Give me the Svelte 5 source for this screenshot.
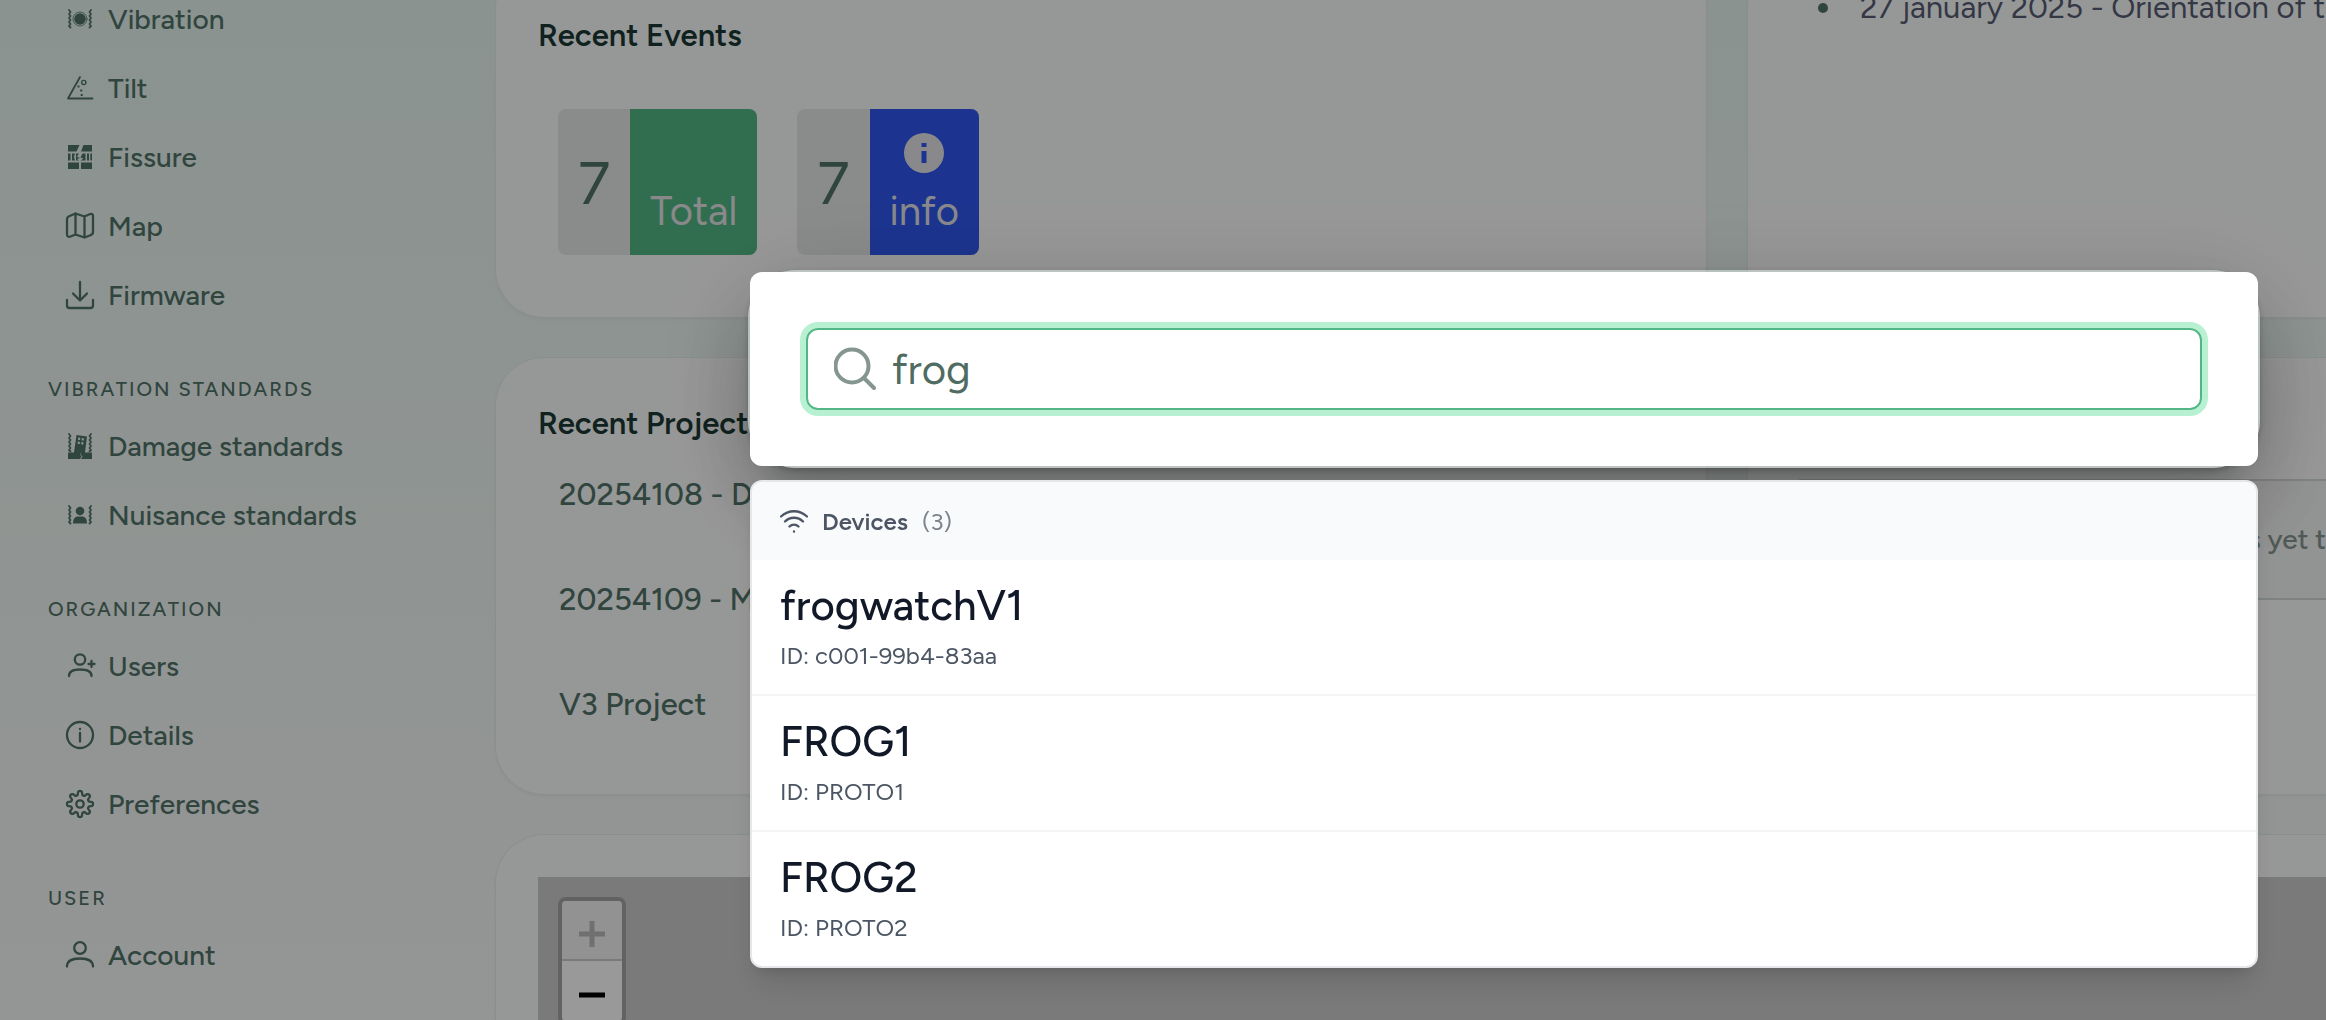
<script>
	let query = $state('frog');

	const sections = [
		{ title: '', items: ['Vibration', 'Tilt', 'Fissure', 'Map', 'Firmware'] },
		{ title: 'Vibration standards', items: ['Damage standards', 'Nuisance standards'] },
		{ title: 'Organization', items: ['Users', 'Details', 'Preferences'] },
		{ title: 'User', items: ['Account'] }
	];

	const projects = ['20254108 - D', '20254109 - M', 'V3 Project'];

	const devices = [
		{ name: 'frogwatchV1', id: 'c001-99b4-83aa' },
		{ name: 'FROG1', id: 'PROTO1' },
		{ name: 'FROG2', id: 'PROTO2' }
	];

	// eight rounded teeth around the centre of a 32x32 box
	function gearPath() {
		let d = '';
		for (let i = 0; i < 128; i++) {
			const a = (i / 128) * Math.PI * 2;
			const wave = Math.tanh(2 * Math.cos(8 * a)) / Math.tanh(2);
			const r = 11 + 2 * wave;
			d += (i ? 'L' : 'M') + (16 + r * Math.sin(a)).toFixed(2) + ' ' + (16 - r * Math.cos(a)).toFixed(2);
		}
		return d + 'Z';
	}
</script>

{#snippet waves(top)}
	<g transform="translate(0 {top})">
		<path stroke-width="1.8" d="M5 0l1.5 2L5 4l1.5 2L5 8l1.5 2L5 12l1.5 2L5 16l1.5 1.500M27 0l-1.500 2L27 4l-1.500 2L27 8l-1.500 2L27 12l-1.500 2L27 16l-1.500 1.500" />
	</g>
{/snippet}

{#snippet icon(name)}
	<svg class="icon" viewBox="0 0 32 32" fill="none" stroke="currentColor" stroke-width="2.3" stroke-linecap="round" stroke-linejoin="round" aria-hidden="true">
		{#if name === 'Vibration'}
			{@render waves(7)}
			<circle cx="16" cy="16" r="5.800" fill="currentColor" stroke="none" />
			<circle cx="16" cy="16" r="7" stroke-width="0.8" />
		{:else if name === 'Tilt'}
			<path stroke-width="1.800" d="M16 5L4 26.500H28.500" />
			<circle cx="19.800" cy="10.500" r="2.100" stroke-width="1.400" />
			<path stroke-width="2" stroke-linecap="butt" d="M13.500 14.500h2M16.200 18.500h2M16.700 23h2" />
		{:else if name === 'Fissure'}
			<g fill="currentColor" stroke="none">
				<path d="M4 4h11.500l-3 6.500H4zM19.500 4H28v6.500H17z" />
				<path d="M4 12.500h2.500v7H4zM8 12.500h3l-1 3.500 1 3.500H8zM12 12.500h3l-2 3 3 1.500-3 1 2 1.500h-3zM18.500 12.500h3v7h-5l3-2-3-1zM23 12.500h2v7h-2zM26.300 12.500H28v7h-1.700z" />
				<path d="M4 21.500h11V28H4zM17 21.500h11V28H17z" />
			</g>
		{:else if name === 'Map'}
			<path d="M4.500 6.500l7-3 9 3 5-2.200c2-.8 3.500-.3 3.500 1.700v16c0 1.700-.8 2.600-2.500 3.200l-6 2.300-9-3-5 2c-2 .8-3.500 0-3.500-2V9.500c0-1.500.3-2.400 1.500-3zM11.500 3.500v21M20.500 6.500v21" />
		{:else if name === 'Firmware'}
			<path d="M16 3v18M9 14.500l7 7 7-7M3 21v5.500C3 28.300 3.700 29 5.500 29h21c1.800 0 2.500-.7 2.500-2.500V21" />
		{:else if name === 'Damage standards'}
			{@render waves(4)}
			<g fill="currentColor" stroke="none">
				<path fill-rule="evenodd" d="M4 22.500h6L12.500 5l10.500 1.500-2 16H28V29H17l1.500-2.500-2-2 1.500-3-2 3 1.500 2L16 29H4zM14.200 7.500v2.500h2V7.700zM17.800 8v2.500h2V8.200zM13.800 11.500v2.500h2v-2.300zM17.300 12v2.500h2v-2.300z" />
			</g>
		{:else if name === 'Nuisance standards'}
			{@render waves(7)}
			<g fill="currentColor" stroke="none">
				<circle cx="16" cy="12" r="4.300" />
				<path d="M9 24.500c0-5 2-7 5-7h4c3 0 5 2 5 7z" />
			</g>
		{:else if name === 'Users'}
			<circle cx="16" cy="9.500" r="5.200" />
			<path d="M5 26c0-4 3.500-6.500 11-6.500S27.500 22 27.500 26M27.500 11v6M24.500 14h6" />
		{:else if name === 'Details'}
			<circle cx="16" cy="16" r="13" />
			<path d="M16 14v8.500M16 10v.2" />
		{:else if name === 'Preferences'}
			<path d={gearPath()} />
			<circle cx="16" cy="16" r="3.700" />
		{:else if name === 'Account'}
			<circle cx="16" cy="9" r="5.800" />
			<path d="M3 27.500c0-5 4-8 13-8s13 3 13 8" />
		{/if}
	</svg>
{/snippet}

<div class="page">
	<nav class="sidebar">
		{#each sections as section}
			{#if section.title}
				<h2>{section.title}</h2>
			{/if}
			{#each section.items as item}
				<a href="#{item}">{@render icon(item)}{item}</a>
			{/each}
		{/each}
	</nav>

	<main>
		<section class="card events">
			<h3>Recent Events</h3>
			<div class="badges">
				<div class="badge">
					<span class="count">7</span>
					<span class="label total">Total</span>
				</div>
				<div class="badge">
					<span class="count">7</span>
					<span class="label info">
						<svg viewBox="0 0 40 40" width="40" height="40" aria-hidden="true">
							<path fill="currentColor" fill-rule="evenodd" d="M20 0a20 20 0 1 0 0 40a20 20 0 1 0 0-40zM17.500 10v4h5v-4zM17.500 18v12h5V18z" />
						</svg>
						info
					</span>
				</div>
			</div>
		</section>

		<section class="card news">
			<ul>
				<li>27 january 2025 - Orientation of t</li>
			</ul>
		</section>

		<section class="card projects">
			<h3>Recent Projects</h3>
			{#each projects as project}
				<a href="#project">{project}</a>
			{/each}
		</section>

		<section class="card activity">
			<div class="empty">s yet t</div>
		</section>

		<section class="card map-card">
			<div class="map">
				<div class="zoom">
					<button class="off" aria-label="Zoom in">
						<svg viewBox="0 0 26 26" width="26" height="26"><path fill="currentColor" d="M0 10.500h10.500V0h5v10.500H26v5H15.500V26h-5V15.500H0z" /></svg>
					</button>
					<button aria-label="Zoom out">
						<svg viewBox="0 0 26 26" width="26" height="26"><path fill="currentColor" d="M0 10.500h26v5H0z" /></svg>
					</button>
				</div>
			</div>
		</section>
	</main>

	<div class="overlay">
		<div class="dialog" role="dialog" aria-label="Search">
			<div class="panel">
				<label class="search">
					<svg viewBox="0 0 44 44" width="44" height="44" fill="none" stroke="currentColor" stroke-width="4" stroke-linecap="round" aria-hidden="true">
						<circle cx="18" cy="19" r="16.500" />
						<path d="M30 31l10 10" />
					</svg>
					<input type="text" aria-label="Search" bind:value={query} />
				</label>
			</div>
		</div>

		<div class="results">
			<header>
				<svg viewBox="0 0 28 28" width="28" height="28" fill="none" stroke="currentColor" stroke-width="2.3" stroke-linecap="round" aria-hidden="true">
					<path d="M1 9.500C8.500 2.500 19.500 2.500 27 9.500M5 14.500c5-5 13-5 18 0M9.500 19.500c2.500-2.500 6.500-2.500 9 0M14 24.500v.2" />
				</svg>
				<strong>Devices</strong>
				<span>({devices.length})</span>
			</header>
			{#each devices as device}
				<a class="result" href="#{device.id}">
					<span class="name">{device.name}</span>
					<span class="id">ID: {device.id}</span>
				</a>
			{/each}
		</div>
	</div>
</div>

<style>
	:global(body) {
		margin: 0;
	}

	.page {
		display: grid;
		grid-template-columns: 496px minmax(0, 1fr);
		height: 100vh;
		overflow: hidden;
		background: linear-gradient(#e6f6f0, #eef7f3 40%, #f7faf9);
		color: #52736a;
		font-family: Figtree, Lato, 'Noto Sans', sans-serif;
		font-weight: 500;
		font-size: 28px;
	}

	a {
		color: inherit;
		text-decoration: none;
	}

	h2, h3, ul {
		margin: 0;
		padding: 0;
	}

	/* scrolled a little way down */
	.sidebar {
		margin-top: -16px;
		padding-left: 48px;
	}

	.sidebar h2 {
		padding: 48px 0 10px;
		font-size: 20px;
		line-height: 24px;
		font-weight: 500;
		letter-spacing: 2px;
		text-transform: uppercase;
	}

	.sidebar a {
		display: flex;
		align-items: center;
		gap: 12px;
		height: 69px;
		padding-left: 16px;
	}

	.icon {
		width: 32px;
		height: 32px;
		flex: none;
	}

	main {
		display: grid;
		grid-template-columns: minmax(0, 1fr) 578px;
		grid-template-rows: 357px 436px 300px;
		gap: 41px 42px;
		margin-top: -40px;
	}

	.card {
		box-sizing: border-box;
		border-radius: 48px;
		padding: 42px;
		background: #fbfdfc;
		box-shadow: 0 0 0 1px #e6efeb, 0 2px 4px rgba(0, 0, 0, 0.06);
	}

	.news, .activity, .map-card {
		border-radius: 48px 0 0 48px;
		padding-right: 0;
	}

	.map-card {
		grid-column: 1 / 3;
	}

	h3 {
		color: #1b3934;
		font-size: 31px;
		line-height: 40px;
		font-weight: 600;
	}

	.events {
		padding-top: 56px;
	}

	.badges {
		display: flex;
		gap: 40px;
		padding: 53px 20px;
	}

	.badge {
		display: flex;
		height: 146px;
		border-radius: 8px;
		overflow: hidden;
		background: #e6e9e9;
	}

	.count {
		padding: 0 20px;
		font-size: 60px;
		line-height: 148px;
		font-weight: 400;
	}

	.label {
		display: flex;
		flex-direction: column;
		align-items: center;
		justify-content: flex-end;
		gap: 14px;
		box-sizing: border-box;
		padding: 0 20px 20px;
		color: #e5e5ea;
		font-size: 40px;
		line-height: 48px;
		font-weight: 400;
	}

	.total {
		background: #53b785;
	}

	.info {
		background: #2f58ee;
	}

	.news {
		overflow: hidden;
		padding-top: 28px;
	}

	.news li {
		display: flex;
		align-items: center;
		gap: 32px;
		padding-left: 28px;
		color: #585d73;
		font-size: 31px;
		line-height: 40px;
		font-weight: 400;
		white-space: nowrap;
	}

	.news li::before {
		content: '';
		width: 10px;
		height: 10px;
		border-radius: 50%;
		background: #52736a;
	}

	.projects {
		padding-top: 46px;
	}

	.projects a {
		display: block;
		padding: 0 21px 65px;
		font-size: 31px;
		line-height: 40px;
	}

	.projects h3 {
		padding-bottom: 31px;
	}

	.activity {
		padding-top: 121px;
	}

	.empty {
		border: 2px solid #d2dbd8;
		border-right: 0;
		border-radius: 12px 0 0 12px;
		background: #f4f5f5;
		color: #84968f;
		font-size: 28px;
		line-height: 117px;
		text-align: right;
	}

	.map {
		height: 258px;
		padding: 20px;
		background: #cbcbcb;
	}

	.zoom {
		display: inline-flex;
		flex-direction: column;
		border: 4px solid #a3a3a3;
		border-radius: 8px;
		overflow: hidden;
	}

	.zoom button {
		display: grid;
		place-items: center;
		width: 60px;
		height: 60px;
		padding: 8px 0 0;
		border: 0;
		background: #fff;
		color: #000;
	}

	.zoom .off {
		box-sizing: content-box;
		height: 50px;
		border-bottom: 2px solid #ccc;
		background: #f4f4f4;
		color: #bbb;
	}

	.overlay {
		position: fixed;
		inset: 0;
		display: flex;
		flex-direction: column;
		gap: 12px;
		padding: 270px 66px 0 748px;
		background: rgba(0, 0, 0, 0.4);
	}

	.dialog {
		border: 2px solid rgba(226, 238, 233, 0.5);
		border-radius: 48px;
		box-shadow: 0 2px 6px rgba(0, 0, 0, 0.2), 0 22px 30px -14px rgba(0, 0, 0, 0.2), 0 48px 76px 6px rgba(0, 0, 0, 0.14), 0 18px 92px 16px rgba(0, 0, 0, 0.12);
	}

	.panel {
		padding: 56px;
		border-radius: 12px;
		background: #fff;
	}

	.search {
		display: flex;
		align-items: center;
		gap: 14px;
		height: 78px;
		padding: 0 26px;
		border: 2px solid #53b785;
		border-radius: 12px;
		box-shadow: 0 0 0 6px #b8f0d2;
		color: #84968f;
	}

	.search input {
		flex: 1;
		min-width: 0;
		padding: 0;
		border: 0;
		outline: 0;
		background: none;
		color: #4f6b62;
		font: inherit;
		font-size: 42px;
		font-weight: 400;
	}

	.results {
		margin: 0 2px;
		border: 2px solid #e5e7eb;
		border-radius: 12px;
		overflow: hidden;
		background: #fff;
		box-shadow: 0 20px 30px -6px rgba(0, 0, 0, 0.12), 0 8px 12px -4px rgba(0, 0, 0, 0.1);
	}

	.results header {
		display: flex;
		align-items: center;
		gap: 14px;
		height: 78px;
		padding: 0 28px;
		background: #f9fafb;
		color: #4b5563;
		font-size: 24px;
	}

	.results strong {
		font-weight: 600;
	}

	.results header span {
		color: #7d838d;
		font-weight: 400;
	}

	.result {
		display: flex;
		flex-direction: column;
		gap: 5px;
		padding: 18px 28px 21px;
		border-bottom: 2px solid #f3f4f6;
	}

	.result:last-child {
		border-bottom: 0;
	}

	.name {
		color: #111827;
		font-size: 42px;
		line-height: 56px;
	}

	.id {
		color: #4b5563;
		font-size: 24px;
		line-height: 34px;
		font-weight: 400;
	}
</style>
